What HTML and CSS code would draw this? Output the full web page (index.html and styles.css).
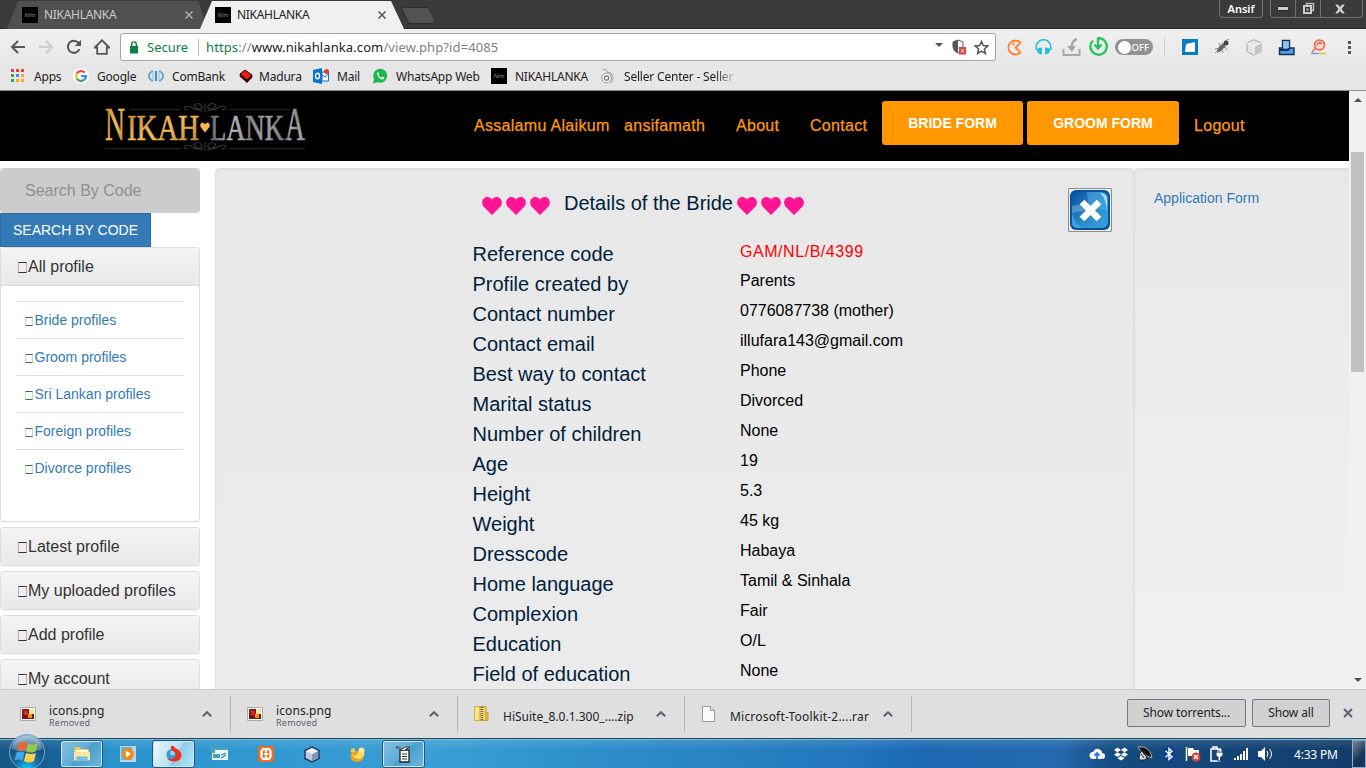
FILE: index.html
```
<!DOCTYPE html>
<html lang="en">
<head>
<meta charset="utf-8">
<title>NIKAHLANKA</title>
<link rel="stylesheet" href="styles.css">
</head>
<body>
<header class="tabstrip">
  <div class="tab"><span class="fav">Nlm</span><span class="tab-name">NIKAHLANKA</span><svg class="tab-x" viewBox="0 0 8 8"><path d="M.5.5l7 7M7.500.5l-7 7"/></svg></div>
  <div class="tab active"><span class="fav">Nlm</span><span class="tab-name">NIKAHLANKA</span><svg class="tab-x" viewBox="0 0 8 8"><path d="M.5.5l7 7M7.500.5l-7 7"/></svg></div>
  <svg class="newtab" width="36" height="20" viewBox="0 0 36 20"><path d="M2 1.500h24q2 0 3 2l5 12q.5 2-1.500 2H10q-2 0-3-2L1 3.500q-.5-2 1-2z" fill="#525252" stroke="#2c2c2c"/></svg>
  <div class="win">
    <span class="user">Ansif</span>
    <div class="winbtns">
      <span class="wb"><svg width="12" height="5"><rect x=".5" y=".5" width="11" height="4" rx="1" fill="#ccc" stroke="#222"/></svg></span>
      <span class="wb"><svg width="13" height="13"><path d="M4.500 3V1.500h7v7H10" fill="none" stroke="#bbb" stroke-width="1.500"/><rect x="2" y="4" width="7" height="7" fill="#333" stroke="#ccc" stroke-width="2"/><rect x="4.500" y="6.500" width="2" height="2" fill="#ccc"/></svg></span>
      <span class="wb last"><svg width="10" height="10"><path d="M0 .5h3L5 3 7 .5h3L6.600 5 10 9.500H7L5 7 3 9.500H0L3.400 5z" fill="#ccc"/></svg></span>
    </div>
  </div>
</header>

<div class="toolbar">
  <div class="navs">
    <svg viewBox="0 0 16 16"><path d="M15 8H2M8 2L2 8l6 6" fill="none" stroke="#555" stroke-width="2"/></svg>
    <svg viewBox="0 0 16 16"><path d="M1 8h13M8 2l6 6-6 6" fill="none" stroke="#ccc" stroke-width="2"/></svg>
    <svg viewBox="0 0 16 16"><path d="M13.500 10A6 6 0 1 1 12.500 4" fill="none" stroke="#555" stroke-width="2"/><path d="M15 .8V7H8.800z" fill="#555"/></svg>
    <svg viewBox="0 0 16 16"><path d="M.8 8.500L8 1.300l7.200 7.200h-2.400v6.300H3.200V8.500z" fill="none" stroke="#555" stroke-width="1.800"/></svg>
  </div>
  <div class="omni">
    <svg width="10" height="13" viewBox="0 0 10 13"><rect x="1" y="5" width="8" height="7.500" fill="#0b8043"/><path d="M2.700 5V3.200a2.300 2.300 0 0 1 4.600 0V5" fill="none" stroke="#0b8043" stroke-width="1.400"/></svg>
    <span class="secure">Secure</span>
    <span class="url"><i>https</i>://<b>www.nikahlanka.com</b>/view.php?id=4085</span>
    <svg class="drop" width="8" height="4"><path d="M0 0h8L4 4z" fill="#555"/></svg>
    <svg width="14" height="16" viewBox="0 0 14 16"><path d="M1 3l5-2 5 2v4q0 5-5 7-5-2-5-7z" fill="#fff" stroke="#555"/><path d="M6 1L1 3v4q0 5 5 7z" fill="#555"/><rect x="7" y="8" width="7" height="7.500" fill="#db4437"/><path d="M9 10l3 3.500m0-3.500l-3 3.500" stroke="#fff"/></svg>
    <svg class="star" width="15" height="15" viewBox="0 0 15 15"><path d="M7.500 1.500l1.800 4.100 4.500.4-3.400 3 1 4.400-3.900-2.300-3.900 2.300 1-4.400-3.400-3 4.500-.4z" fill="none" stroke="#555" stroke-width="1.500"/></svg>
  </div>
  <div class="exts">
    <span class="e1"><svg width="17" height="17" viewBox="0 0 17 17"><path d="M14.500 3.700A7 7 0 1 0 14.500 13.300L9.500 8.500z" fill="none" stroke="#ff8135" stroke-width="1.800" stroke-linejoin="round"/><circle cx="7.500" cy="5" r="1.200" fill="#ff8135"/></svg></span>
    <span class="e2"><svg width="17" height="16" viewBox="0 0 17 16"><path d="M1.200 11V8a7.200 7.200 0 0 1 14.600 0v3" fill="none" stroke="#29bfdc" stroke-width="1.600"/><path d="M7 8.500v7Q2 15 2 11.500t5-3zM10 8.500v7q5-.5 5-4t-5-3z" fill="#29bfdc"/></svg></span>
    <span class="e3"><svg width="19" height="19" viewBox="0 0 19 19"><path d="M1.500 11v6h16v-6" fill="none" stroke="#a8a8a8" stroke-width="2"/><path d="M15 1q-5 1-5.500 9" fill="none" stroke="#a8a8a8" stroke-width="2.400"/><path d="M5 8l5 6 4-6z" fill="#a8a8a8"/></svg></span>
    <span class="e4"><svg width="20" height="20" viewBox="0 0 20 20"><path d="M5 3.500a8.200 8.200 0 1 0 5-2.200v10M6.500 7.500l3.500 4 3.500-4" fill="none" stroke="#27c45b" stroke-width="2.300"/></svg></span>
    <span class="toggle">OFF</span>
    <span class="sep"></span>
    <span class="e5"><svg width="16" height="16"><rect width="16" height="16" fill="#087bc5"/><path d="M4 5l9-2v10H3z" fill="#fff"/></svg></span>
    <span class="e5"><svg width="17" height="16" viewBox="0 0 17 16"><path d="M3 14L14 3M1 10l11-2M5 4l4 10M8 4l5 7M1 14l7-7" stroke="#777" stroke-width=".8"/><ellipse cx="7" cy="9" rx="2.200" ry="5" transform="rotate(42 7 9)" fill="#666"/><circle cx="12" cy="4" r="2.500" fill="#444"/><path d="M11 2l4-2" stroke="#888"/></svg></span>
    <span class="e5"><svg width="16" height="17" viewBox="0 0 16 17"><path d="M8 .7l7 3v9l-7 3.600-7-3.600v-9z" fill="#e4e4e4" stroke="#aaa"/><path d="M8 7l7-3v8.700l-7 3.600z" fill="#c4c4c4"/><path d="M1 4l7 3v9M8 7l7-3" fill="none" stroke="#fff"/></svg></span>
    <span class="e5"><svg width="17" height="17" viewBox="0 0 17 17"><path d="M1.500 9h3V1.500h7V8l1 1h3.500v6.500H1.500z" fill="#4a9bec" stroke="#16334f" stroke-width="1.400"/><path d="M2 11h7q2 0 2-2" fill="none" stroke="#16334f" stroke-width="1.800"/><path d="M5.200 2.200h5.600V9H5.200z" fill="#8cc4f8"/></svg></span>
    <span class="e5"><svg width="17" height="16" viewBox="0 0 17 16"><circle cx="9.500" cy="6" r="5" fill="#ffd7cd" stroke="#ef5f45" stroke-width="1.500"/><path d="M6 9l-4 4M7 6q2-4 5-1" fill="none" stroke="#ef5f45" stroke-width="1.500"/><path d="M1 14.500h8" stroke="#58a7e8" stroke-width="1.500"/><path d="M9 14.500h7" stroke="#f2bd48" stroke-width="1.500"/></svg></span>
    <span class="e6"><svg width="4" height="14"><path d="M0 1h3v3H0zM0 6h3v3H0zM0 11h3v3H0z" fill="#555"/></svg></span>
  </div>
</div>

<div class="bookmarks">
  <span class="bm w62"><svg viewBox="0 0 16 16"><path d="M1 1h3v3H1zM6 1h3v3H6zM11 1h3v3h-3z" fill="#ea4335"/><path d="M1 6h3v3H1z" fill="#34a853"/><path d="M6 6h3v3H6z" fill="#4285f4"/><path d="M11 6h3v3h-3zM6 11h3v3H6zM11 11h3v3h-3z" fill="#f9ab20"/><path d="M1 11h3v3H1z" fill="#34a853"/></svg>Apps</span>
  <span class="bm w75"><svg viewBox="0 0 16 16"><circle cx="8" cy="8" r="8" fill="#fff"/><g fill="none" stroke-width="2.200"><path d="M11.700 4.500A5 5 0 0 0 3.800 5.500" stroke="#ea4335"/><path d="M3.800 5.500a5 5 0 0 0 0 5" stroke="#fbbc05"/><path d="M3.800 10.500a5 5 0 0 0 7.500 1.200" stroke="#34a853"/><path d="M11.300 11.700A5 5 0 0 0 13 8.200H8.200" stroke="#4285f4"/></g></svg>Google</span>
  <span class="bm w90"><svg viewBox="0 0 16 16"><path d="M5 3Q1 4.500 1 8t4 5M11 3q4 1.500 4 5t-4 5" fill="none" stroke="#5aa5d2" stroke-width="1.800"/><path d="M5 4v8M11 4v8" stroke="#8dc0df"/><path d="M8 3v10" stroke="#2483c0" stroke-width="1.800"/></svg>ComBank</span>
  <span class="bm w75b"><svg viewBox="0 0 14 16"><path d="M1 6l5-4 7 5-5 5z" fill="#f5160c" stroke="#000"/><path d="M1 6l7 6v2.500L1 8.500zM8 12l5-5v2.500l-5 5z" fill="#500" stroke="#000" stroke-width=".6"/></svg>Madura</span>
  <span class="bm w60"><svg viewBox="0 0 16 16"><path d="M0 2l9-2v16l-9-2z" fill="#0a72c8"/><path d="M9 4h6.500v9H9z" fill="#fff" stroke="#0a72c8"/><path d="M9 7l3 2 4-4" fill="none" stroke="#0a72c8"/><ellipse cx="4.500" cy="8" rx="2" ry="2.700" fill="none" stroke="#fff" stroke-width="1.400"/><circle cx="13.500" cy="3.500" r="2.500" fill="#e53935"/></svg>Mail</span>
  <span class="bm w118"><svg viewBox="0 0 16 16"><circle cx="8.200" cy="7.800" r="7" fill="#19b94c"/><path d="M1 15.500l1.200-5.500L6.500 14z" fill="#19b94c"/><path d="M5 5l1-1 1.500 2-1 1q1 2 3 2.500l1-1 2 1.500-1.500 1.500Q6 11 5 5z" fill="#fff"/></svg>WhatsApp Web</span>
  <span class="bm w109"><span class="fav">Nlm</span>NIKAHLANKA</span>
  <span class="bm seller"><svg viewBox="0 0 16 16"><circle cx="6.500" cy="10" r="4.800" fill="#fff" stroke="#999"/><circle cx="6.500" cy="10" r="2.200" fill="none" stroke="#777" stroke-width="1.300"/><path d="M3 2q3-2 4 2 6 1 6 6 0 3-2 5" fill="none" stroke="#b0b0b0" stroke-width="1.300"/></svg>Seller Center - Seller P</span>
</div>

<div class="viewport">
  <main class="page">
    <nav class="sitebar">
      <svg class="logo" width="206" height="60" viewBox="0 0 206 60">
        <defs>
          <linearGradient id="gold" x1="0" y1="0" x2="1" y2="1"><stop offset="0" stop-color="#b77c3b"/><stop offset=".5" stop-color="#f5bd51"/><stop offset="1" stop-color="#b87c42"/></linearGradient>
          <linearGradient id="silver" x1="0" y1="0" x2="1" y2="0"><stop offset="0" stop-color="#606166"/><stop offset=".3" stop-color="#b9bac0"/><stop offset=".55" stop-color="#85868c"/><stop offset=".75" stop-color="#a4a5aa"/><stop offset="1" stop-color="#77787d"/></linearGradient>
        </defs>
        <g stroke="#1f1f1f" fill="none"><path d="M27 10.500h50M126 10.500h61M2 49.500h76M126 49.500h76" stroke-width="1.500"/><g id="orn" stroke="#333" stroke-width="1.100"><path d="M102 4v9M100 12q-8-2-9-6 4-3 7 0t-1 4q-5 2-9-2-6-2-7 1 1 3 4 1M104 12q8-2 9-6-4-3-7 0t1 4q5 2 9-2 6-2 7 1-1 3-4 1"/></g><use href="#orn" y="39"/></g>
        <g class="logo-text"><g fill="url(#gold)" stroke="url(#gold)"><text x="2" y="41" font-size="47" textLength="20" lengthAdjust="spacingAndGlyphs">N</text><text x="24" y="41" font-size="35" textLength="72" lengthAdjust="spacingAndGlyphs">IKAH</text></g>
        <g fill="url(#silver)" stroke="url(#silver)"><text x="107" y="41" font-size="35" textLength="74" lengthAdjust="spacingAndGlyphs">LANK</text><text x="182" y="41" font-size="47" textLength="20" lengthAdjust="spacingAndGlyphs">A</text></g></g>
        <path d="M102 33.500l-4.500-5.500q-1-4 2-4.500l2.500 1.500 2.500-1.500q3 .5 2 4.500z" fill="#f5b850"/>
      </svg>
      <div class="menu">
        <a class="m1">Assalamu Alaikum</a><a class="m2">ansifamath</a><a class="m3">About</a><a class="m4">Contact</a>
        <a class="cta bride">BRIDE FORM</a><a class="cta groom">GROOM FORM</a><a class="m5">Logout</a>
      </div>
    </nav>
    <div class="cols">
      <aside class="side">
        <div class="search">Search By Code</div>
        <div class="sbtn">SEARCH BY CODE</div>
        <section class="panel open">
          <h4><i class="box"></i>All profile</h4>
          <ul>
            <li><i class="box"></i>Bride profiles</li><li><i class="box"></i>Groom profiles</li><li><i class="box"></i>Sri Lankan profiles</li><li><i class="box"></i>Foreign profiles</li><li><i class="box"></i>Divorce profiles</li>
          </ul>
        </section>
        <section class="panel"><h4><i class="box"></i>Latest profile</h4></section>
        <section class="panel"><h4><i class="box"></i>My uploaded profiles</h4></section>
        <section class="panel"><h4><i class="box"></i>Add profile</h4></section>
        <section class="panel"><h4><i class="box"></i>My account</h4></section>
      </aside>
      <article class="well main">
        <div class="heading">
          <svg width="68" height="18" viewBox="0 0 68 18" fill="#ff1493"><path id="h" d="M10 18L1.500 9.500C-1.500 5.500.8 0 5.300 0 7.500 0 9 1 10 2.600 11 1 12.500 0 14.700 0c4.500 0 6.800 5.500 3.800 9.500z"/><use href="#h" x="24"/><use href="#h" x="48"/></svg>
          <h2>Details of the Bride</h2>
          <svg width="68" height="18" viewBox="0 0 68 18" fill="#ff1493"><use href="#h"/><use href="#h" x="24"/><use href="#h" x="47"/></svg>
          <div class="close"><svg width="40" height="40" viewBox="0 0 40 40"><defs><linearGradient id="cb" x1="0" y1="0" x2="1" y2="1"><stop offset="0" stop-color="#0a4f9a"/><stop offset=".5" stop-color="#2787c8"/><stop offset="1" stop-color="#3ca2dd"/></linearGradient></defs><rect width="40" height="40" rx="6" fill="#07529c"/><rect x="2" y="2" width="36" height="36" rx="6" fill="url(#cb)"/><path d="M17 2h15q6 0 6 7v12q-10-3-19-1z" fill="#4da9df" opacity=".6"/><path d="M2 16q7-2 17-1v5q-9 1-17 3z" fill="#7fb4dd" opacity=".5"/><path d="M30 3q7 0 7 8v12q0-14-7-20z" fill="#b6def5"/><path d="M2 23q2 12 12 15H8q-6 0-6-6z" fill="#3da2df"/><path d="M12 12l17 17M29 12L12 29" stroke="#fff" stroke-width="6.500"/></svg></div>
        </div>
        <dl class="details">
          <dt>Reference code</dt><dd class="ref">GAM/NL/B/4399</dd>
          <dt>Profile created by</dt><dd>Parents</dd>
          <dt>Contact number</dt><dd>0776087738 (mother)</dd>
          <dt>Contact email</dt><dd>illufara143@gmail.com</dd>
          <dt>Best way to contact</dt><dd>Phone</dd>
          <dt>Marital status</dt><dd>Divorced</dd>
          <dt>Number of children</dt><dd>None</dd>
          <dt>Age</dt><dd>19</dd>
          <dt>Height</dt><dd>5.3</dd>
          <dt>Weight</dt><dd>45 kg</dd>
          <dt>Dresscode</dt><dd>Habaya</dd>
          <dt>Home language</dt><dd>Tamil &amp; Sinhala</dd>
          <dt>Complexion</dt><dd>Fair</dd>
          <dt>Education</dt><dd>O/L</dd>
          <dt>Field of education</dt><dd>None</dd>
        </dl>
      </article>
      <aside class="well right">Application Form</aside>
    </div>
  </main>
  <div class="scroll"><svg width="8" height="4"><path d="M0 4h8L4 0z" fill="#505050"/></svg><div class="thumb"></div><svg width="8" height="4"><path d="M0 0h8L4 4z" fill="#505050"/></svg></div>
</div>

<div class="downloads">
  <div class="dl"><svg width="16" height="14" viewBox="0 0 16 14"><path d="M.5.5h15v13H.5z" fill="#fff" stroke="#aaa"/><path d="M2 2h12v10H2z" fill="#7e1410"/><path d="M9 2h5v5H9z" fill="#f3e1a0"/><path d="M3 3l5 1v4H4z" fill="#c93022"/><path d="M8 7h4v4H8z" fill="#e6961e"/></svg><div class="name">icons.png<small>Removed</small></div><svg class="chev" width="10" height="6"><path d="M.8 5.300L5 1.200l4.200 4.100"/></svg></div>
  <div class="dl"><svg width="16" height="14" viewBox="0 0 16 14"><path d="M.5.5h15v13H.5z" fill="#fff" stroke="#aaa"/><path d="M2 2h12v10H2z" fill="#7e1410"/><path d="M9 2h5v5H9z" fill="#f3e1a0"/><path d="M3 3l5 1v4H4z" fill="#c93022"/><path d="M8 7h4v4H8z" fill="#e6961e"/></svg><div class="name">icons.png<small>Removed</small></div><svg class="chev" width="10" height="6"><path d="M.8 5.300L5 1.200l4.200 4.100"/></svg></div>
  <div class="dl file"><svg width="16" height="16" viewBox="0 0 16 16"><path d="M.5.5h6v14h-6z" fill="#f6e48c" stroke="#d6ae35"/><path d="M6 .5h6v14H6z" fill="#f4d767" stroke="#c99b28"/><path d="M12 6.500h2v8h-2z" fill="#efc951" stroke="#c99b28"/><path d="M8 1v13" stroke="#666" stroke-width="2.500" stroke-dasharray="1 1"/></svg><div class="name">HiSuite_8.0.1.300_....zip</div><svg class="chev" width="10" height="6"><path d="M.8 5.300L5 1.200l4.200 4.100"/></svg></div>
  <div class="dl file"><svg width="16" height="16" viewBox="0 0 16 16"><path d="M1.500.5h8l4 4v11h-12z" fill="#fafafa" stroke="#999"/><path d="M9.500.5v4h4" fill="#ddd" stroke="#999"/></svg><div class="name rar">Microsoft-Toolkit-2....rar</div><svg class="chev" width="10" height="6"><path d="M.8 5.300L5 1.200l4.200 4.100"/></svg></div>
  <div class="dlend"><span class="b1">Show torrents...</span><span class="b2">Show all</span><svg width="10" height="10"><path d="M1 1l8 8M9 1L1 9" stroke="#5a6278" stroke-width="2"/></svg></div>
</div>

<footer class="taskbar">
  <svg class="orb" width="38" height="38" viewBox="0 0 38 38"><defs><radialGradient id="ob" cx=".5" cy="1" r=".95"><stop offset="0" stop-color="#17d5ff"/><stop offset=".35" stop-color="#136fa9"/><stop offset=".75" stop-color="#174f7e"/><stop offset="1" stop-color="#8db4d0"/></radialGradient></defs><circle cx="19" cy="19" r="17.500" fill="url(#ob)" stroke="#7eaac8"/><path d="M4 16Q6 4 19 3q13 1 15 13-14 5-30 0z" fill="#fff" opacity=".3"/><path d="M11 10q4-2 8 0l-2 8q-4-2-8 0z" fill="#ee6537"/><path d="M20 10q5 3 10 0l-2 8q-5 3-10 0z" fill="#96c84b"/><path d="M8.500 19.500q4-2 8 0l-2 8q-4-2-8 0z" fill="#43a5e5"/><path d="M18 20q5 2 10 0l-2 8q-5 3-10 0z" fill="#ffd04b"/></svg>
  <div class="apps">
    <span class="app on"><svg width="18" height="18" viewBox="0 0 18 18"><path d="M1 2h6l1 2h8v12H1z" fill="#e9c767"/><path d="M3 5h12v5H3z" fill="#fffbd8"/><path d="M1 7h16v8H1z" fill="#f8e7a0"/><path d="M4 17v-5h10v5h-3v-2H7v2z" fill="#80c5ed" stroke="#4a9fd3" stroke-width=".7"/></svg></span>
    <span class="app"><svg width="16" height="16"><rect width="16" height="16" fill="#b4d8ee"/><rect x="1" y="1" width="11" height="13" fill="#6eb4dc"/><circle cx="8" cy="8" r="6" fill="#f48a16"/><path d="M6 4.500l5 3.500-5 3.500z" fill="#fff"/></svg></span>
    <span class="app on lit"><svg width="18" height="18" viewBox="0 0 18 18"><circle cx="7" cy="9.500" r="5.500" fill="#3899d5"/><circle cx="7.500" cy="8" r="2.500" fill="#8ed5f4"/><path d="M6 1q3-1 4 2 6 2 6.500 7.500-.5 5.500-7 6Q4 16.500 2 13q5 2 8-.5 2-3-.5-5.500Q5 5 6 1z" fill="#ee2f1b"/></svg></span>
    <span class="app"><svg width="17" height="14"><path d="M1 1h16v12H1z" fill="#eef8fc"/><path d="M0 0h17v3H4v3H0zM2 7h7v4H2z" fill="#42a5bf"/><path d="M10 8l5-2M10 11l5-3" stroke="#2784a0" stroke-width="1.300"/></svg></span>
    <span class="app"><svg width="16" height="16"><rect width="16" height="16" rx="2" fill="#ec6d1d"/><path d="M8 6.500V5.500A2 2 0 0 0 4 4.500q-1.500 1.500 0 3.500-1.500 2 0 3.500a2 2 0 0 0 4-1v-1 1a2 2 0 0 0 4 1q1.500-1.500 0-3.500 1.500-2 0-3.500a2 2 0 0 0-4 1zM6 8h4" fill="none" stroke="#fff" stroke-width="2.200"/></svg></span>
    <span class="app"><svg width="16" height="17" viewBox="0 0 16 17"><path d="M8 1l7 3.500v8L8 16l-7-3.500v-8z" fill="#bccbe2" stroke="#243b61" stroke-width="1.500"/><path d="M8 8l6-3v7l-6 3z" fill="#7f96bd"/><path d="M2 5l6-3 6 3-6 3z" fill="#eef3fa"/></svg></span>
    <span class="app"><svg width="17" height="17" viewBox="0 0 17 17"><ellipse cx="8" cy="10.500" rx="6.500" ry="5.500" fill="#eca41e"/><path d="M2 8q3 3 6 1 2-5 6-4 3 3 0 6-6 5-12-3z" fill="#ffdc60"/><circle cx="12.500" cy="4.500" r="3" fill="#ffe68c"/><circle cx="4" cy="4.500" r="2.300" fill="#f6c744"/></svg></span>
    <span class="app on"><svg width="17" height="18" viewBox="0 0 17 18"><path d="M5 5h9v12H5z" fill="#fff" stroke="#222" stroke-width="1.300"/><path d="M7 9h5M7 11.500h5M7 14h5" stroke="#333"/><path d="M1 2q4-1 6 2 3-3 8-2-4 1-6 4-4-2-8-4z" fill="#eee" stroke="#222" stroke-width=".8"/></svg></span>
  </div>
  <div class="tray">
    <svg viewBox="0 0 16 16"><path d="M4 13a3.500 3.500 0 0 1 0-7Q6 2 9.500 3T13 7a3 3 0 0 1 0 6z" fill="#fff"/><path d="M8 13V8M5.500 9.500L8 7l2.500 2.500" fill="none" stroke="#2476e8" stroke-width="1.800"/></svg>
    <svg viewBox="0 0 16 16"><path d="M4.500 1.500L8 4 4.500 6.300 1 4zM11.500 1.500L15 4l-3.500 2.300L8 4zM4.500 6.300L8 8.600l-3.500 2.300L1 8.600zM11.500 6.300L15 8.600l-3.500 2.300L8 8.600zM8 9.700l3.500 2.500L8 14.500l-3.500-2.300z" fill="#fff"/></svg>
    <svg viewBox="0 0 16 16"><path d="M1 1q4 8 14 11Q14 4 7 1z" fill="#111" stroke="#aaa"/><path d="M2 14q0-8 3-9 2 4 5 6l-2 3z" fill="#ddd" stroke="#222"/><path d="M4 8l3 4" stroke="#222"/></svg>
    <svg viewBox="0 0 16 16"><ellipse cx="8" cy="8" rx="6" ry="8" fill="#0a4297"/><path d="M4.500 4.800l6.500 6L8 13.500v-11l3 2.700-6.500 6" fill="none" stroke="#fff" stroke-width="1.400"/></svg>
    <svg viewBox="0 0 16 16"><path d="M1.500 1v14" stroke="#fff" stroke-width="1.500"/><path d="M3 2h5l1 2h5v6H3z" fill="#fff"/><circle cx="11" cy="11" r="4.500" fill="#df3b2e"/><path d="M9 9l4 4m0-4l-4 4" stroke="#fff" stroke-width="1.500"/></svg>
    <svg viewBox="0 0 16 16"><path d="M2 3h9v12H2zM4 1h4v2H4z" fill="none" stroke="#fff" stroke-width="1.500"/><path d="M7 6h7v3q0 2-2.500 2v4H9v-4q-2 0-2-2z" fill="#fff" stroke="#153e6b"/><path d="M9 3v3m3-3v3" stroke="#fff"/></svg>
    <svg viewBox="0 0 16 16"><path d="M1 12h2v2H1zM4 10h2v4H4zM7 8h2v6H7zM10 5h2v9h-2zM13 2h2v12h-2z" fill="#fff"/></svg>
    <svg viewBox="0 0 16 16"><path d="M1 5h3l4-4v14l-4-4H1z" fill="#fff"/><path d="M10 5q2 3 0 6M12.500 3q4 5 0 10" fill="none" stroke="#fff"/></svg>
    <span class="time">4:33 PM</span>
    <span class="peek"></span>
  </div>
</footer>
</body>
</html>
```
FILE: styles.css
```
* { box-sizing: border-box; }
body { margin: 0; width: 1366px; height: 768px; overflow: hidden; display: flex; flex-direction: column; font: 12px "Noto Sans", sans-serif; color: #222; background: #fff; }
svg { flex: none; display: block; }

/* browser tabs */
.tabstrip { height: 29px; flex: none; background: #3a3a3a; display: flex; padding-left: 7px; border-bottom: 1px solid #2d2d2d; }
.tab { width: 201px; height: 28px; margin-top: 1px; padding-left: 15px; display: flex; align-items: center; background: #505050; color: #ccc; clip-path: polygon(0 100%, 11px 0, 191px 0, 100% 100%); }
.tab.active { width: 204px; margin-left: -8px; background: #f0f0f0; color: #222; height: 28px; clip-path: polygon(0 100%, 12px 0, 191px 0, 100% 100%); }
.fav { width: 16px; height: 16px; background: #000; color: #888; font: italic 6px/16px "Noto Sans", sans-serif; text-align: center; flex: none; }
.tab-name { width: 141px; margin: -2px 0 0 6px; letter-spacing: -.3px; }
.tab-x { width: 8px; height: 8px; fill: none; stroke: currentColor; stroke-width: 1.4; opacity: .8; }
.newtab { margin: 6px 0 0 -3px; }
.win { margin-left: auto; display: flex; height: 18px; gap: 7px; padding-right: 3px; }
.user { width: 44px; border: 1px solid #707070; border-top: 0; border-radius: 0 0 4px 4px; color: #fff; font-size: 11px; font-weight: 600; line-height: 17px; text-align: center; }
.winbtns { display: flex; border: 1px solid #707070; border-top: 0; border-radius: 0 0 4px 4px; }
.wb { width: 25px; display: flex; align-items: center; justify-content: center; border-right: 1px solid #707070; }
.wb.last { width: 41px; border: 0; padding-right: 3px; }

/* toolbar */
.toolbar { height: 34px; flex: none; background: linear-gradient(#f0f0f0, #e8e8e8); display: flex; align-items: flex-start; padding-top: 4px; }
.navs { width: 120px; height: 28px; padding-left: 10px; display: flex; gap: 12px; align-items: center; }
.navs svg { width: 16px; height: 16px; }
.omni { width: 876px; height: 28px; border: 1px solid #a5a5a5; border-radius: 3px; background: #fff; display: flex; align-items: center; padding: 0 6px 0 8px; font-size: 13px; }
.secure { width: 51px; margin-left: 8px; color: #0b8043; }
.url { border-left: 1px solid #b5b5b5; padding-left: 7px; line-height: 17px; color: #808080; letter-spacing: .1px; }
.url i { color: #0b8043; font-style: normal; }
.url b { color: #222; font-weight: 400; }
.drop { margin: 0 9px 5px auto; }
.star { margin-left: 8px; }
.exts { display: flex; height: 28px; align-items: center; flex: 1; }
.exts span { display: flex; align-items: center; justify-content: center; }
.e1 { width: 36px; } .e2 { width: 22px; } .e3 { width: 34px; } .e4 { width: 20px; } .e5 { width: 32px; } .e6 { width: 32px; }
.exts .toggle { width: 38px; height: 16px; margin-left: 7px; border-radius: 8px; background: #929292; color: #fff; font-size: 9.5px; font-weight: 500; justify-content: flex-end; padding-right: 4px; gap: 1px; }
.toggle::before { content: ""; width: 13px; height: 13px; border-radius: 50%; background: #fff; flex: none; }
.exts .sep { width: 1px; height: 20px; margin: 0 9px 0 11px; background: #d0d0d0; }

/* bookmarks */
.bookmarks { height: 28px; flex: none; background: #e6e6e6; border-bottom: 1px solid #8c8c8c; display: flex; align-items: center; padding: 0 0 1px 10px; }
.bm { display: flex; align-items: center; gap: 8px; white-space: nowrap; flex: none; letter-spacing: -.2px; }
.bm svg { width: 16px; height: 16px; }
.w62 { width: 63px; } .w75 { width: 75px; } .w90 { width: 90px; } .w75b { width: 75px; gap: 5px; } .w60 { width: 59px; } .w118 { width: 119px; } .w109 { width: 109px; letter-spacing: -.25px; }
.seller { width: 150px; mask-image: linear-gradient(90deg, #000 76%, transparent 92%); }

/* page */
.viewport { height: 598px; flex: none; display: flex; font-family: "Liberation Sans", Arial, sans-serif; overflow: hidden; }
.page { width: 1349px; height: 598px; overflow: hidden; }
.sitebar { height: 70px; background: #000; display: flex; padding-left: 103px; }
.logo { margin-top: 8px; }
.logo-text { font-family: "Liberation Serif", serif; stroke-width: .6; }
.menu { display: flex; margin-left: 165px; font-size: 16px; color: #ff9a0c; line-height: 70px; letter-spacing: .3px; white-space: nowrap; -webkit-text-stroke: .25px #ff9a0c; }
.m1 { width: 150px; } .m2 { width: 112px; } .m3 { width: 74px; } .m4 { width: 72px; }
.cta { height: 44px; margin: 10px 4px 0 0; background: #ff9800; border-radius: 3px; color: #fff; font: bold 14px/44px "Liberation Sans", sans-serif; text-align: center; letter-spacing: 0; -webkit-text-stroke: 0; }
.bride { width: 141px; } .groom { width: 152px; } .m5 { margin-left: 11px; }
.cols { display: flex; padding-top: 7px; align-items: flex-start; }
.side { width: 200px; margin-right: 15px; flex: none; }
.search { height: 45px; border-radius: 4px; background: #ccc; color: #909090; font-size: 16px; line-height: 45px; padding-left: 25px; }
.sbtn { width: 151px; height: 34px; background: #337ab7; border: 1px solid #2e6da4; color: #fff; font-size: 14px; line-height: 33px; text-align: center; white-space: nowrap; }
.panel { border: 1px solid #ddd; border-radius: 4px; margin-bottom: 5px; background: #fff; box-shadow: 0 1px 1px rgba(0,0,0,.05); overflow: hidden; }
.panel.open { height: 275px; }
.panel h4 { margin: 0; height: 37px; background: linear-gradient(#f5f5f5, #e8e8e8); font-weight: 400; font-size: 16px; line-height: 37px; color: #333; padding-left: 16px; display: flex; align-items: center; white-space: nowrap; }
.panel.open h4 { height: 38px; border-bottom: 1px solid #ddd; }
.box { width: 9px; height: 11px; border: 1px solid #b9a9c4; border-top-color: #333; border-bottom-color: #333; margin: 2px 1px 0 1px; flex: none; }
.panel ul { margin: 15px 16px 0 15px; padding: 0; list-style: none; }
.panel li { height: 37px; border-top: 1px solid #ddd; display: flex; align-items: center; font-size: 14px; color: #337ab7; padding-left: 9px; white-space: nowrap; }
li .box { width: 8px; height: 9px; border-color: #c4dec4; border-top-color: #3c763d; border-bottom-color: #3c763d; margin: 2px 1.5px 0 0; }
.well { border: 1px solid #e0e0e0; border-radius: 4px; box-shadow: inset 0 1px 2px rgba(0,0,0,.04); background: linear-gradient(#e8e8e8, #f5f5f5); flex: none; }
.main { width: 919px; height: 1900px; }
.heading { display: flex; height: 69px; padding: 19px 0 0 266px; }
.heading > svg { margin-top: 9px; }
.heading h2 { margin: 4px 4px 0 14px; width: 169px; font-size: 20px; font-weight: 400; line-height: 22px; color: #00213b; white-space: nowrap; }
.close { width: 44px; height: 44px; border: 1px solid #8d8d8d; border-radius: 1px; padding: 1px; margin-left: 263px; background: #eee; }
.details { display: grid; grid-template-columns: 267px 300px; grid-auto-rows: 30px; margin: 0 0 0 257px; }
dt { font-size: 20px; line-height: 32px; color: #00213b; white-space: nowrap; margin-left: -.5px; }
dd { margin: 0; font-size: 16px; line-height: 25px; color: #000; }
dd.ref { color: red; line-height: 27px; letter-spacing: .55px; }
.right { width: 230px; height: 750px; padding: 21px 0 0 19px; font-size: 14px; line-height: 17px; color: #337ab7; }
.scroll { width: 17px; background: #f1f1f1; display: flex; flex-direction: column; align-items: center; padding: 7px 0; }
.thumb { width: 13px; height: 220px; background: #c1c1c1; margin: 50px 0 auto; }

/* downloads */
.downloads { height: 50px; flex: none; background: #dfdfdf; border-top: 1px solid #ccc; border-bottom: 1px solid #284654; display: flex; padding-top: 6px; }
.dl { width: 227px; height: 36px; padding: 0 18px 0 16px; border-right: 1px solid #b5b5b5; display: flex; align-items: center; }
.dl:first-child { width: 231px; padding-left: 20px; }
.name { margin: 3px 0 0 13px; line-height: 15px; white-space: nowrap; letter-spacing: .1px; }
.file .name { margin: 4px 0 0 13px; letter-spacing: 0; }
.file .rar { letter-spacing: .2px; }
.name small { display: block; font-size: 9px; line-height: 10px; color: #5a6278; letter-spacing: .25px; }
.chev { margin-left: auto; fill: none; stroke: #5a6278; stroke-width: 2; }
.dlend { margin-left: auto; display: flex; padding-right: 13px; align-items: center; height: 34px; }
.dlend span { height: 28px; border: 1px solid #70788b; border-radius: 2px; background: #d1d1d1; text-align: center; line-height: 26px; white-space: nowrap; margin-right: 6px; letter-spacing: -.1px; }
.dlend .b1 { width: 119px; } .dlend .b2 { width: 78px; margin-right: 13px; }

/* taskbar */
.taskbar { height: 29px; flex: none; display: flex; border-top: 1px solid #79b9de; background: linear-gradient(rgba(255,255,255,.12), transparent 35%), linear-gradient(90deg, #145785 0, #17639a 55px, #2a93cc 110px, #3a9ed4 440px, #2f91ca 570px, #2276bd 850px, #1d68b3 920px, #2469ad 1060px, #164c83 1110px, #123b69 1366px); }
.orb { margin: -7px 0 0 8px; position: relative; }
.apps { display: grid; grid-template-columns: repeat(8, 43px); gap: 3px; margin-left: 14px; }
.app { height: 28px; display: flex; align-items: center; justify-content: center; }
.app.on { border: 1px solid #235978; box-shadow: inset 0 0 0 1px #c9e8f6; border-radius: 3px; background: linear-gradient(135deg, #8bc1e1, #5aacd8 50%, #499fcc 51%, #6cb8df); }
.app.lit { background: linear-gradient(120deg, #f0fbff, #b3ddf0 55%, #8fc9e4 56%, #b9e7f9); }
.tray { margin-left: auto; display: flex; align-items: center; gap: 8px; }
.tray svg { width: 16px; height: 16px; }
.time { width: 58px; margin: 0 -8px 0 13px; color: #fff; white-space: nowrap; letter-spacing: -.2px; }
.peek { width: 14px; height: 28px; border: 1px solid #93aac0; background: linear-gradient(135deg, #78889a, #15365b 60%); }
```
